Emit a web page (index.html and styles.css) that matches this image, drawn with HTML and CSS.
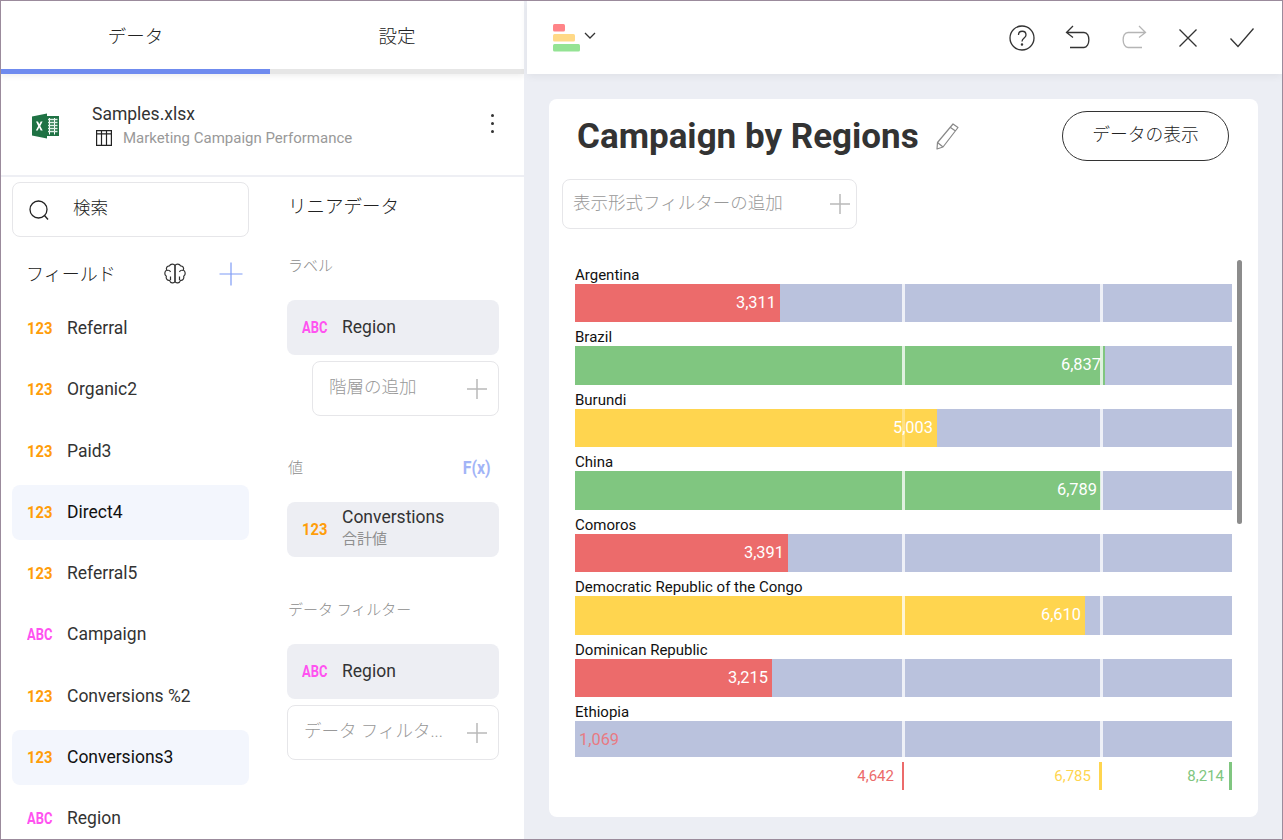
FILE: index.html
```html
<!DOCTYPE html>
<html lang="ja">
<head>
  <meta charset="UTF-8">
  <meta name="viewport" content="width=device-width, initial-scale=1.0">
  <title>Campaign by Regions</title>
  <link rel="stylesheet" href="styles.css">
</head>
<body>
  <div class="window">
    <aside class="side">
      <div class="tabs">
        <div class="tab active">データ</div>
        <div class="tab">設定</div>
      </div>
      <div class="source">
        <svg class="excel" width="27" height="26" viewBox="0 0 27 26">
          <rect x="11" y="3" width="16" height="20" fill="#1f7244"/>
          <path d="M17.500 5v16.500M22.500 5v16.500" stroke="#fff" stroke-width="1"/>
          <path d="M16 6.500h9.500M16 9.500h9.500M16 12.500h9.500M16 15.500h9.500M16 18.500h9.500" stroke="#dff0e6" stroke-width="1.400"/>
          <path d="M0 3.500 15 .5v25L0 22.500z" fill="#1f7244"/>
          <path d="M4 8.500h2l1.300 2.800 1.400-2.800h1.900l-2.300 4.400 2.400 4.600h-2l-1.500-3-1.500 3H3.800l2.400-4.600z" fill="#fff"/>
        </svg>
        <div class="source-text">
          <div class="file-name">Samples.xlsx</div>
          <div class="sheet-name">
            <svg width="16" height="16" viewBox="0 0 16 16" fill="none" stroke="#222" stroke-width="1.200">
              <path d="M.6.600h14.800v14.800H.6zM.6 3.800h14.800M5.500 .6v14.800M10.500 .6v14.800"/>
            </svg>
            <span>Marketing Campaign Performance</span>
          </div>
        </div>
        <div class="dots"><i></i><i></i><i></i></div>
      </div>
      <div class="columns">
        <div class="fields">
          <div class="search">
            <svg width="22" height="22" viewBox="0 0 22 22" fill="none" stroke="#222" stroke-width="1.300">
              <circle cx="10.500" cy="10.500" r="8.500"/>
              <path d="M16.500 16.500 20 20.500"/>
            </svg>
            <span class="cjk-up">検索</span>
          </div>
          <div class="fields-head">
            <span class="fields-title">フィールド</span>
            <svg class="brain" width="26" height="26" viewBox="0 0 26 26" fill="none" stroke="#333" stroke-width="1.200" stroke-linejoin="round">
              <path d="M13 4.500C12 2.500 8.500 2.500 7.500 4.800 5 4.800 3.800 7 4.700 9 2.500 10.300 2 13.700 4.300 15.200 3.600 17.600 5.500 19.800 7.500 19.300 8.400 22.300 12 22.800 13 20.500z"/>
              <path d="M13 4.500C14 2.500 17.500 2.500 18.500 4.800 21 4.800 22.200 7 21.300 9 23.500 10.300 24 13.700 21.700 15.200 22.400 17.600 20.500 19.800 18.500 19.300 17.600 22.300 14 22.800 13 20.500z"/>
              <path d="M5 9.500C6.500 9 8 9.500 8.500 11M8.500 19.300V15.500M21 9.500C19.500 9 18 9.500 17.500 11M17.500 19.300V15.500"/>
            </svg>
            <svg class="plus-blue" width="24" height="24" viewBox="0 0 24 24" stroke="#7f9cf5" stroke-width="1.200">
              <path d="M12 .5v23M.5 12h23"/>
            </svg>
          </div>
          <ul class="field-list">
            <li><span class="type"><b class="num">123</b></span>Referral</li>
            <li><span class="type"><b class="num">123</b></span>Organic2</li>
            <li><span class="type"><b class="num">123</b></span>Paid3</li>
            <li class="on"><span class="type"><b class="num">123</b></span>Direct4</li>
            <li><span class="type"><b class="num">123</b></span>Referral5</li>
            <li><span class="type"><b class="abc">ABC</b></span>Campaign</li>
            <li><span class="type"><b class="num">123</b></span>Conversions %2</li>
            <li class="on"><span class="type"><b class="num">123</b></span>Conversions3</li>
            <li><span class="type"><b class="abc">ABC</b></span>Region</li>
          </ul>
        </div>
        <div class="config">
          <div class="config-title">リニアデータ</div>
          <div class="config-label first">ラベル</div>
          <div class="chip"><span class="type"><b class="abc">ABC</b></span>Region</div>
          <div class="add indent"><span class="cjk-up">階層の追加</span><svg class="plus-gray" width="20" height="20" viewBox="0 0 20 20"><path d="M10 0v20M0 10h20"/></svg></div>
          <div class="config-label values"><span>値</span><b class="fx">F(x)</b></div>
          <div class="chip"><span class="type"><b class="num">123</b></span>
            <div class="chip-text">Converstions<small>合計値</small></div>
          </div>
          <div class="config-label filter">データ フィルター</div>
          <div class="chip"><span class="type"><b class="abc">ABC</b></span>Region</div>
          <div class="add"><span class="cjk-up">データ フィルタ...</span><svg class="plus-gray" width="20" height="20" viewBox="0 0 20 20"><path d="M10 0v20M0 10h20"/></svg></div>
        </div>
      </div>
    </aside>
    <main class="main">
      <header class="toolbar">
        <div class="picker">
          <svg width="28" height="28" viewBox="0 0 28 28">
            <rect x="0" y="0" width="12" height="7.500" rx="1.500" fill="#ff8488"/>
            <rect x="0" y="10" width="22" height="7.500" rx="1.500" fill="#ffd987"/>
            <rect x="0" y="20" width="27" height="7.500" rx="1.500" fill="#94e394"/>
          </svg>
          <svg class="chev" width="12" height="8" viewBox="0 0 12 8" fill="none" stroke="#333" stroke-width="1.300"><path d="M1 1l5 5 5-5"/></svg>
        </div>
        <div class="actions">
          <svg width="26" height="26" viewBox="0 0 26 26" fill="none" stroke="#333" stroke-width="1.300">
            <circle cx="13" cy="13" r="12"/>
            <path d="M9.500 10c0-5 7.500-5 7.500 0 0 3-4 3-4 6.500"/>
            <circle cx="13" cy="19.500" r=".6" fill="#333"/>
          </svg>
          <svg width="26" height="26" viewBox="0 0 26 26" fill="none" stroke="#333" stroke-width="1.300">
            <path d="M8 1 1.500 7.500 8 12.500M1.500 7.500H19c7 0 6 15 0 15H5"/>
          </svg>
          <svg width="26" height="26" viewBox="0 0 26 26" fill="none" stroke="#b5b5b5" stroke-width="1.300">
            <path d="M18 1l6.500 6.500L18 12.500M24.500 7.500H7c-7 0-6 15 0 15h14"/>
          </svg>
          <svg width="22" height="22" viewBox="0 0 22 22" fill="none" stroke="#333" stroke-width="1.300">
            <path d="M2.500 2.500l17 17M19.500 2.500l-17 17"/>
          </svg>
          <svg width="26" height="22" viewBox="0 0 26 22" fill="none" stroke="#333" stroke-width="1.300">
            <path d="M1.500 11.500l7.500 8 15.500-18"/>
          </svg>
        </div>
      </header>
      <section class="card">
        <div class="card-head">
          <h1>Campaign by Regions</h1>
          <svg class="pencil" width="26" height="28" viewBox="0 0 26 28" fill="none" stroke="#888" stroke-width="1.200" stroke-linejoin="round">
            <path d="M19 2l5 3.500L9 25l-6 2 .5-6.500zM16.500 5.500l5 3.500M3.500 20.500l5.500 4.500"/>
          </svg>
          <button class="show-data"><span class="cjk-up">データの表示</span></button>
        </div>
        <div class="view-filter"><span class="cjk-up">表示形式フィルターの追加</span><svg class="plus-gray" width="20" height="20" viewBox="0 0 20 20"><path d="M10 0v20M0 10h20"/></svg></div>
        <div class="chart">
          <div class="scrollbar"></div>
          <div class="rows">
            <div class="row"><div class="name">Argentina</div><div class="track">
              <div class="fill red" style="width:205px">3,311</div>
              <i class="mark low"></i><i class="mark mid"></i></div></div>
            <div class="row"><div class="name">Brazil</div><div class="track">
              <div class="fill green" style="width:530px">6,837</div>
              <i class="mark low"></i><i class="mark mid"></i></div></div>
            <div class="row"><div class="name">Burundi</div><div class="track">
              <div class="fill yellow" style="width:362px">5,003</div>
              <i class="mark low faint"></i><i class="mark mid"></i></div></div>
            <div class="row"><div class="name">China</div><div class="track">
              <div class="fill green" style="width:526px">6,789</div>
              <i class="mark low"></i><i class="mark mid"></i></div></div>
            <div class="row"><div class="name">Comoros</div><div class="track">
              <div class="fill red" style="width:213px">3,391</div>
              <i class="mark low"></i><i class="mark mid"></i></div></div>
            <div class="row"><div class="name">Democratic Republic of the Congo</div><div class="track">
              <div class="fill yellow" style="width:510px">6,610</div>
              <i class="mark low"></i><i class="mark mid"></i></div></div>
            <div class="row"><div class="name">Dominican Republic</div><div class="track">
              <div class="fill red" style="width:197px">3,215</div>
              <i class="mark low"></i><i class="mark mid"></i></div></div>
            <div class="row"><div class="name">Ethiopia</div><div class="track">
              <div class="fill outside">1,069</div>
              <i class="mark low"></i><i class="mark mid"></i></div></div>
          </div>
          <div class="legend">
            <div class="tick t-red" style="width:329px">4,642</div>
            <div class="tick t-yellow" style="width:198px">6,785</div>
            <div class="tick t-green" style="width:130px">8,214</div>
          </div>
        </div>
      </section>
    </main>
  </div>
</body>
</html>
```

FILE: styles.css
```css
* {
  box-sizing: border-box;
}
html, body {
  margin: 0;
  height: 100%;
}
body {
  font-family: 'Roboto', 'Noto Sans CJK JP', sans-serif;
  color: #2f2f38;
  background: #fff;
}
svg {
  display: block;
  flex: none;
}
.window {
  display: flex;
  width: 1283px;
  height: 840px;
  border: 1px solid #9b8b9c;
  overflow: hidden;
  background: #eceef4;
}
.cjk-up {
  display: block;
  padding-bottom: 6px;
}

/* left panel */
.side {
  width: 523px;
  height: 838px;
  flex: none;
  overflow: hidden;
  background: #fff;
}
.tabs {
  display: flex;
  height: 73px;
  box-shadow: 0 2px 6px rgba(0,0,0,0.07);
}
.tab {
  flex: 1;
  padding-top: 23px;
  text-align: center;
  font-size: 18.500px;
  line-height: 26px;
  font-weight: 300;
  color: #222;
  border-bottom: 5px solid #e6e6e6;
}
.tab.active {
  flex: none;
  width: 269px;
  border-bottom-color: #6f8bef;
}
.source {
  display: flex;
  align-items: center;
  height: 103px;
  padding: 2px 30px 0 31px;
  border-bottom: 2px solid #eeeff4;
}
.source-text {
  margin-left: 33px;
  flex: 1;
}
.file-name {
  font-size: 17.500px;
  line-height: 22px;
  color: #333;
}
.sheet-name {
  display: flex;
  align-items: center;
  gap: 11px;
  margin: 3px 0 0 4px;
  font-size: 15px;
  line-height: 20px;
  color: #999;
}
.dots {
  display: flex;
  flex-direction: column;
  gap: 5px;
  margin-bottom: 4px;
}
.dots i {
  width: 3px;
  height: 3px;
  border-radius: 50%;
  background: #333;
}
.columns {
  display: flex;
  padding: 5px 25px 0 11px;
  gap: 38px;
}
.fields {
  width: 237px;
  flex: none;
}
.search {
  display: flex;
  align-items: center;
  height: 55px;
  padding-left: 15px;
  gap: 23px;
  border: 1px solid #e6e6e9;
  border-radius: 8px;
  font-size: 17.500px;
  font-weight: 300;
  color: #222;
}
.fields-head {
  display: flex;
  align-items: center;
  height: 64px;
  padding: 9px 6px 0 14px;
}
.fields-title {
  flex: 1;
  font-size: 18px;
  font-weight: 300;
  color: #222;
  padding-bottom: 2px;
}
.brain {
  margin-right: 31px;
}
.field-list {
  list-style: none;
  margin: 0;
  padding: 0;
  display: flex;
  flex-direction: column;
  gap: 6.250px;
}
.field-list li {
  display: flex;
  align-items: center;
  height: 55px;
  padding: 0 0 1px 15px;
  border-radius: 8px;
  font-size: 17.500px;
  color: #333;
}
.field-list li.on {
  background: #f3f6fd;
  color: #111;
}
.type {
  width: 40px;
  flex: none;
}
.num, .abc {
  display: block;
  font-family: 'Roboto', sans-serif;
  font-size: 17px;
  font-weight: 700;
  transform: scaleX(0.87);
  transform-origin: left center;
}
.num {
  color: #ff9d0a;
}
.abc {
  color: #ff52f0;
  transform: scaleX(0.76);
}

/* middle column */
.config {
  width: 212px;
  flex: none;
}
.config-title {
  height: 46px;
  padding: 13px 0 0 1px;
  font-size: 18.500px;
  line-height: 24px;
  font-weight: 300;
  color: #222;
}
.config-label {
  display: flex;
  justify-content: space-between;
  align-items: center;
  padding-left: 1px;
  font-size: 15px;
  line-height: 20px;
  font-weight: 300;
  color: #8d8d8d;
}
.config-label.first {
  margin: 28px 0 24px;
}
.config-label.values {
  margin: 42px 0 24px;
  padding-right: 8px;
}
.config-label.filter {
  margin: 43px 0 24px;
}
.fx {
  font-size: 18px;
  font-weight: 700;
  color: #a2b4f7;
  transform: scaleX(0.88);
  transform-origin: right center;
}
.chip {
  display: flex;
  align-items: center;
  height: 55px;
  padding: 0 0 2px 15px;
  border-radius: 8px;
  background: #edeef3;
  font-size: 17.500px;
  color: #333;
}
.chip-text {
  line-height: 20px;
  margin-top: 1px;
}
.chip-text small {
  display: block;
  font-size: 15px;
  line-height: 24px;
  color: #8f8f8f;
}
.add {
  display: flex;
  align-items: center;
  justify-content: space-between;
  height: 55px;
  margin-top: 6px;
  padding: 0 11px 0 16px;
  border: 1px solid #e6e6e9;
  border-radius: 8px;
  font-size: 17.500px;
  font-weight: 300;
  color: #999;
}
.add.indent {
  margin-left: 25px;
}
.plus-gray {
  stroke: #b9b9b9;
  stroke-width: 1.500;
}

/* right side */
.main {
  flex: 1;
}
.toolbar {
  display: flex;
  justify-content: space-between;
  align-items: center;
  height: 73px;
  margin-left: 3px;
  padding: 0 27px 0 26px;
  background: #fff;
  box-shadow: 0 2px 8px rgba(0,0,0,0.06);
}
.picker {
  display: flex;
  align-items: center;
  gap: 3px;
}
.chev {
  margin-top: -3px;
}
.actions {
  display: flex;
  align-items: center;
  gap: 30px;
}
.card {
  margin: 25px 24px 0 25px;
  height: 718px;
  padding: 12px 13px 0 13px;
  background: #fff;
  border-radius: 8px;
}
.card-head {
  display: flex;
  align-items: center;
  height: 50px;
  padding-left: 15px;
}
.card-head h1 {
  margin: 0;
  font-size: 35px;
  font-weight: 700;
  color: #333;
}
.pencil {
  margin-left: 15px;
}
.show-data {
  margin-left: auto;
  margin-right: 16px;
  width: 167px;
  height: 50px;
  padding: 0;
  border: 1px solid #333;
  border-radius: 25px;
  background: #fff;
  font: 300 17.800px 'Roboto', 'Noto Sans CJK JP', sans-serif;
  color: #222;
}
.view-filter {
  display: flex;
  align-items: center;
  justify-content: space-between;
  width: 295px;
  height: 50px;
  margin-top: 18px;
  padding: 0 6px 0 10px;
  border: 1px solid #e6e6e9;
  border-radius: 8px;
  font-size: 17.500px;
  font-weight: 300;
  color: #999;
}
.chart {
  position: relative;
  margin: 31px 0 0 13px;
  width: 657px;
}
.scrollbar {
  position: absolute;
  top: 0;
  right: -10px;
  width: 5px;
  height: 264px;
  border-radius: 3px;
  background: #8c8c8c;
}
.rows {
  height: 497px;
  overflow: hidden;
  padding-top: 5px;
}
.row {
  height: 62.430px;
}
.name {
  height: 19px;
  font-size: 15px;
  line-height: 21.400px;
  color: #111;
}
.track {
  position: relative;
  height: 38.400px;
  background: #bac2dd;
}
.fill {
  height: 100%;
  padding-right: 4px;
  text-align: right;
  font-size: 16.400px;
  line-height: 38px;
  color: #fff;
  white-space: nowrap;
}
.fill.red {
  background: #ec6b6b;
}
.fill.green {
  background: #80c680;
}
.fill.yellow {
  background: #ffd54f;
}
.fill.outside {
  padding: 0 0 0 4px;
  text-align: left;
  color: #e87a83;
}
.mark {
  position: absolute;
  top: 0;
  bottom: 0;
  width: 2.600px;
  background: rgba(255,255,255,0.75);
}
.mark.faint {
  background: rgba(255,255,255,0.3);
}
.mark.low {
  left: 327px;
}
.mark.mid {
  left: 525px;
}
.legend {
  display: flex;
  margin-top: 5px;
  height: 28px;
}
.tick {
  padding-right: 8px;
  text-align: right;
  font-size: 15px;
  line-height: 28px;
  border-right: 2px solid;
}
.t-red {
  color: #ec6b6b;
  border-right-color: #ec6b6b;
}
.t-yellow {
  color: #ffd54f;
  border-right: 3px solid #ffd54f;
}
.t-green {
  padding-right: 5px;
  color: #80c680;
  border-right: 3px solid #80c680;
}
```
